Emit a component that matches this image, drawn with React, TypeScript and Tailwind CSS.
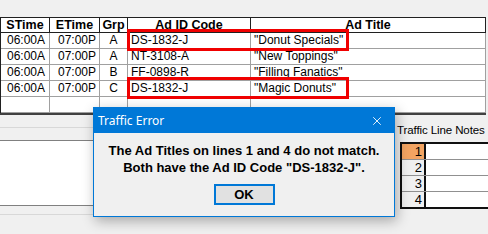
import { X } from 'lucide-react'

const rows = [
  { s: '06:00A', e: '07:00P', g: 'A', code: 'DS-1832-J', title: '"Donut Specials"' },
  { s: '06:00A', e: '07:00P', g: 'A', code: 'NT-3108-A', title: '"New Toppings"' },
  { s: '06:00A', e: '07:00P', g: 'B', code: 'FF-0898-R', title: '"Filling Fanatics"' },
  { s: '06:00A', e: '07:00P', g: 'C', code: 'DS-1832-J', title: '"Magic Donuts"' },
  { s: '', e: '', g: '', code: '', title: '' },
]

const cell = 'h-4 border-r border-b border-[#a0a0a0] leading-[15px] truncate'

export default function App() {
  return (
    <div className="relative h-[234px] w-[488px] overflow-hidden bg-[#f0f0f0] font-['Liberation_Sans',sans-serif] text-[12px] text-black">
      <div className="h-[17px]" />

      <div className="w-[486px] border-l border-t border-[#202020]">
        <div className="grid grid-cols-[49px_50px_28px_123px_235px] text-[12.5px] font-bold">
          {['STime', 'ETime', 'Grp', 'Ad ID Code', 'Ad Title'].map((h) => (
            <div key={h} className="h-[15px] border-r border-b border-[#202020] bg-white text-center leading-[14px]">
              {h}
            </div>
          ))}
        </div>
        {rows.map((r, i) => (
          <div key={i} className="grid grid-cols-[49px_50px_28px_123px_235px] bg-white">
            <div className={`${cell} pl-[6px]`}>{r.s}</div>
            <div className={`${cell} pl-[8px]`}>{r.e}</div>
            <div className={`${cell} text-center`}>{r.g}</div>
            <div className={`${cell} pl-[3px]`}>{r.code}</div>
            <div className={`${cell} pl-[3px]`}>{r.title}</div>
          </div>
        ))}
      </div>
      <div className="h-[2px] w-[486px] bg-[#404040]" />

      <div className="flex">
        <div className="w-[394px] shrink-0">
          <div className="mt-[12px] h-px bg-[#d8d8d8]" />
          <div className="mt-[12px] h-[66px] border-t border-b border-[#808080] bg-white" />
          <div className="mt-[8px] h-px bg-[#d8d8d8]" />
        </div>
        <div className="min-w-0 flex-1 overflow-hidden pl-[3px]">
          <div className="mt-[7px] whitespace-nowrap text-[11.5px] leading-[16px] tracking-[-0.1px]">Traffic Line Notes</div>
          <div className="ml-[3px] mt-[4px] w-[100px] border-2 border-[#101010] bg-white">
            {[1, 2, 3, 4].map((n) => (
              <div key={n} className="flex h-4 border-b border-[#909090] last:h-[15px] last:border-b-0">
                <div
                  className={`w-[24px] border-r-2 border-[#101010] pr-[2px] text-right text-[13px] leading-[15px] ${
                    n === 1 ? 'bg-[#f2a462]' : 'bg-[#f0f0f0]'
                  }`}
                >
                  {n}
                </div>
                <div className="flex-1" />
              </div>
            ))}
          </div>
        </div>
      </div>

      <div className="pointer-events-none absolute left-[127px] top-[29px] h-[22px] w-[222px] border-[3px] border-[#f00000]" />
      <div className="pointer-events-none absolute left-[127px] top-[77px] h-[22px] w-[222px] border-[3px] border-[#f00000]" />

      <div className="absolute left-[93px] top-[107px] flex h-[110px] w-[302px] flex-col border border-[#0078d7] bg-[#f0f0f0] shadow-[2px_4px_12px_rgba(0,0,0,0.3)]">
        <div className="flex h-[25px] items-center justify-between bg-[#0078d7] pl-[4px] pr-[10px] text-white">
          <span className="font-['Noto_Sans',sans-serif] text-[12px]">Traffic Error</span>
          <X size={14} strokeWidth={1.5} />
        </div>
        <div className="flex flex-1 flex-col items-center pt-[9px] text-[13px] font-bold leading-[17px]">
          <div className="whitespace-nowrap">The Ad Titles on lines 1 and 4 do not match.</div>
          <div className="whitespace-nowrap">Both have the Ad ID Code "DS-1832-J".</div>
          <button
            type="button"
            className="mt-[8px] h-[21px] w-[61px] border-2 border-[#0078d7] bg-[#e1e1e1] text-[13px] font-bold leading-[16px]"
          >
            OK
          </button>
        </div>
      </div>
    </div>
  )
}
